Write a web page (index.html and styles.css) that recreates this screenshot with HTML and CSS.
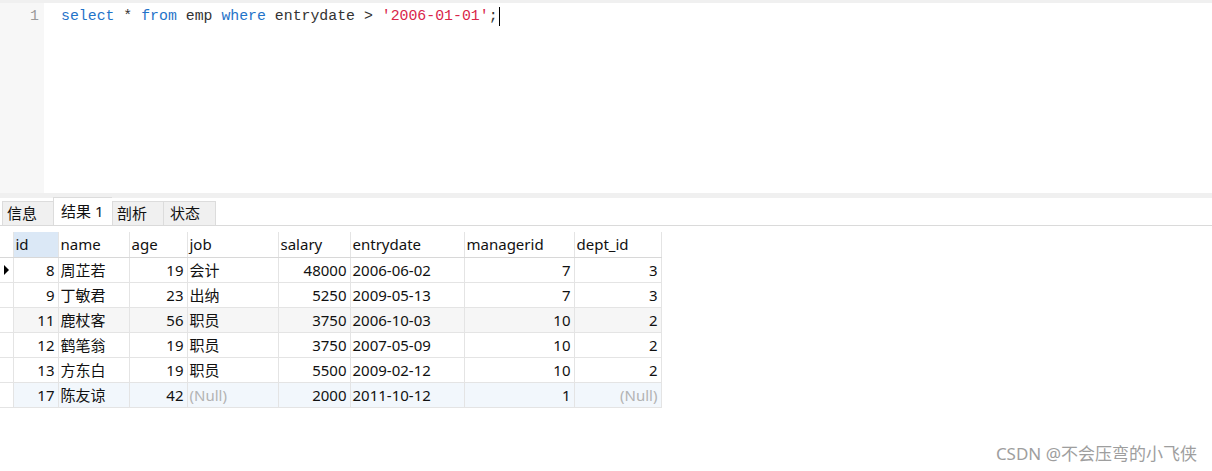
FILE: index.html
```html
<!DOCTYPE html>
<html>
<head>
<meta charset="utf-8">
<link rel="stylesheet" href="styles.css">
</head>
<body>
<div class="topstrip"></div>
<div class="editor">
  <div class="gutter"><div class="ln">1</div></div>
  <div class="code"><div class="line"><span class="kw">select</span> * <span class="kw">from</span> emp <span class="kw">where</span> entrydate &gt; <span class="str">'2006-01-01'</span>;<span class="caret"></span></div></div>
</div>
<div class="splitter"></div>
<div class="tabs">
  <div class="tab">信息</div>
  <div class="tab active">结果 1</div>
  <div class="tab">剖析</div>
  <div class="tab">状态</div>
</div>
<div class="gridwrap">
<table class="grid">
  <colgroup>
    <col class="c-ind"><col class="c-id"><col class="c-name"><col class="c-age"><col class="c-job"><col class="c-sal"><col class="c-date"><col class="c-mgr"><col class="c-dept">
  </colgroup>
  <thead>
    <tr><th class="ind"></th><th class="sel">id</th><th>name</th><th>age</th><th>job</th><th>salary</th><th>entrydate</th><th>managerid</th><th>dept_id</th></tr>
  </thead>
  <tbody>
    <tr><td class="ind cur"><span class="tri"></span></td><td class="n">8</td><td>周芷若</td><td class="n">19</td><td>会计</td><td class="n">48000</td><td>2006-06-02</td><td class="n">7</td><td class="n">3</td></tr>
    <tr><td class="ind"></td><td class="n">9</td><td>丁敏君</td><td class="n">23</td><td>出纳</td><td class="n">5250</td><td>2009-05-13</td><td class="n">7</td><td class="n">3</td></tr>
    <tr class="alt"><td class="ind"></td><td class="n">11</td><td>鹿杖客</td><td class="n">56</td><td>职员</td><td class="n">3750</td><td>2006-10-03</td><td class="n">10</td><td class="n">2</td></tr>
    <tr><td class="ind"></td><td class="n">12</td><td>鹤笔翁</td><td class="n">19</td><td>职员</td><td class="n">3750</td><td>2007-05-09</td><td class="n">10</td><td class="n">2</td></tr>
    <tr><td class="ind"></td><td class="n">13</td><td>方东白</td><td class="n">19</td><td>职员</td><td class="n">5500</td><td>2009-02-12</td><td class="n">10</td><td class="n">2</td></tr>
    <tr class="hov"><td class="ind"></td><td class="n">17</td><td>陈友谅</td><td class="n">42</td><td class="null">(Null)</td><td class="n">2000</td><td>2011-10-12</td><td class="n">1</td><td class="n null">(Null)</td></tr>
  </tbody>
</table>
</div>
<div class="watermark">CSDN @不会压弯的小飞侠</div>
</body>
</html>
```
FILE: styles.css
```css
html, body {
  margin: 0;
  padding: 0;
  background: #ffffff;
}
body {
  width: 1212px;
  height: 471px;
  position: relative;
  overflow: hidden;
  font-family: "Noto Sans", "Noto Sans CJK SC", sans-serif;
}
.topstrip {
  height: 3px;
  background: #f0f0f0;
}
.editor {
  display: flex;
  height: 190px;
}
.gutter {
  width: 44px;
  background: #f7f7f7;
  padding-top: 2px;
  box-sizing: border-box;
}
.ln {
  height: 22px;
  line-height: 22px;
  text-align: right;
  padding-right: 5px;
  font-family: "Liberation Mono", "DejaVu Sans Mono", monospace;
  font-size: 14.85px;
  color: #9a9a9a;
}
.code {
  flex: 1;
  padding-left: 17px;
  padding-top: 2px;
}
.line {
  height: 22px;
  line-height: 22px;
  font-family: "Liberation Mono", "DejaVu Sans Mono", monospace;
  font-size: 14.85px;
  color: #333333;
  white-space: pre;
  display: flex;
  align-items: center;
}
.kw { color: #1f73c9; }
.str { color: #d9254a; }
.caret {
  display: inline-block;
  width: 1px;
  height: 19px;
  background: #000;
  margin-left: 1px;
}
.splitter {
  height: 5px;
  background: #f0f0f0;
}
.tabs {
  display: flex;
  align-items: flex-end;
  height: 28px;
  padding-left: 2px;
  border-bottom: 1px solid #dadada;
  box-sizing: border-box;
  font-size: 15px;
  color: #111;
}
.tab {
  height: 24px;
  line-height: 23px;
  padding: 0 5px 0 4px;
  background: #f0f0f0;
  border: 1px solid #dcdcdc;
  border-bottom: none;
  border-right: none;
  box-sizing: border-box;
  width: 51px;
  white-space: nowrap;
}
.tab:last-child {
  border-right: 1px solid #dcdcdc;
  width: 53px;
  padding-left: 6px;
}
.tab.active {
  background: #ffffff;
  height: 28px;
  line-height: 26px;
  width: 59px;
  padding-left: 7px;
}
.gridwrap {
  padding-top: 6px;
}
.grid {
  border-collapse: collapse;
  table-layout: fixed;
  width: 661px;
  font-size: 15px;
  color: #111;
}
.c-ind { width: 13px; }
.c-id { width: 45px; }
.c-name { width: 71px; }
.c-age { width: 58px; }
.c-job { width: 91px; }
.c-sal { width: 72px; }
.c-date { width: 114px; }
.c-mgr { width: 110px; }
.c-dept { width: 87px; }
.grid th, .grid td {
  height: 25px;
  padding: 0 3px 0 2px;
  box-sizing: border-box;
  border: 1px solid #e4e4e4;
  border-top: none;
  white-space: nowrap;
  overflow: hidden;
  text-align: left;
  font-weight: normal;
  line-height: 24px;
}
.grid th {
  border-bottom: 1px solid #d8d8d8;
}
.grid th:first-child, .grid td:first-child {
  border-left: none;
}
.grid th.sel {
  background: #dbe8f6;
}
.grid td.n {
  text-align: right;
}
.grid td.null {
  color: #b3b3b3;
}
.grid tr.alt td { background: #f6f6f6; }
.grid tr.hov td { background: #f2f7fc; }
.grid td.ind, .grid th.ind {
  padding: 0;
  background: #ffffff;
  position: relative;
}
.grid tr.hov td.ind, .grid tr.alt td.ind { background: #ffffff; }
.tri {
  position: absolute;
  left: 4px;
  top: 7px;
  width: 0;
  height: 0;
  border-top: 5px solid transparent;
  border-bottom: 5px solid transparent;
  border-left: 5px solid #000;
}
.watermark {
  position: absolute;
  right: 15px;
  top: 440px;
  font-size: 17px;
  color: #9e9e9e;
  letter-spacing: 0px;
}
```
